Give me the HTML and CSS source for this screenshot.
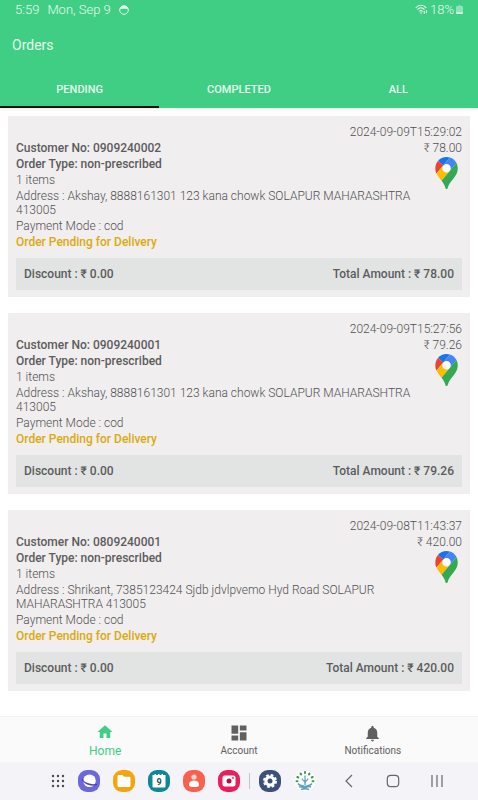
FILE: index.html
```
<!DOCTYPE html>
<html lang="en">
  <head>
    <meta charset="UTF-8" />
    <meta name="viewport" content="width=device-width, initial-scale=1.0" />
    <title>Orders</title>
    <link rel="stylesheet" href="styles.css">
  </head>
  <body>
    <!-- Shared map pin -->
    <svg class="defs" width="0" height="0" aria-hidden="true">
      <symbol id="map-pin" viewBox="0 0 92 132">
        <circle cx="46" cy="46" r="20" fill="#fff" />
        <path fill="#1a73e8" d="M60.2 2.2C55.8.8 51 0 46.1 0 32 0 19.3 6.4 10.8 16.5l21.8 18.3L60.2 2.2z" />
        <path fill="#ea4335" d="M10.8 16.5C4.1 24.5 0 34.9 0 46.1c0 8.7 1.7 15.7 4.6 22l28-33.3-21.8-18.3z" />
        <path fill="#4285f4" d="M46.2 28.5c9.8 0 17.7 7.9 17.7 17.7 0 4.3-1.6 8.3-4.2 11.4 0 0 13.9-16.6 27.5-32.7-5.6-10.8-15.3-19-27-22.7L32.6 34.8c3.3-3.8 8.1-6.3 13.6-6.3" />
        <path fill="#fbbc04" d="M46.2 63.8c-9.8 0-17.7-7.9-17.7-17.7 0-4.3 1.5-8.3 4.1-11.3l-28 33.3c4.8 10.6 12.8 19.2 21 29.9l34.1-40.5c-3.3 3.9-8.1 6.3-13.5 6.3" />
        <path fill="#34a853" d="M59.1 109.2c15.4-24.1 33.3-35 33.3-63 0-7.7-1.9-14.9-5.2-21.3L25.6 98c2.6 3.4 5.3 7.3 7.9 11.3 9.4 14.5 6.8 23.1 12.8 23.1s3.4-8.7 12.8-23.2" />
      </symbol>
    </svg>

    <header class="header">
      <div class="status-bar">
        <span>5:59</span>
        <span>Mon, Sep 9</span>
        <svg width="10" height="10" viewBox="0 0 10 10">
          <circle cx="5" cy="5" r="4.3" fill="none" stroke="#e6faef" stroke-width="1" />
          <path d="M1 4.6C1.2 2 3 .8 5 .8s3.8 1.2 4 3.8C7.5 3.2 6.2 4.4 5 3.6 3.8 4.4 2.5 3.2 1 4.6z" fill="#e6faef" />
        </svg>
        <div class="status-right">
          <svg width="13" height="11" viewBox="0 0 13 11" fill="none" stroke="#e6faef" stroke-width="1.2">
            <path d="M.8 3.8C3.8.4 8.4.4 11.2 3.8M2.5 5.6c2-2.2 5-2.2 7 0M4.3 7.4c1-1 2.5-1 3.4 0" />
            <circle cx="6" cy="9" r=".8" fill="#e6faef" stroke="none" />
            <path d="M9.3 7v2.8M11.5 6.3v3" />
          </svg>
          <span>18%</span>
          <svg width="7" height="10" viewBox="0 0 8 11">
            <path d="M2.5 0h3v1H7a1 1 0 0 1 1 1v6H0V2a1 1 0 0 1 1-1h1.5z" fill="#8fe3b7" />
            <path d="M0 8h8v1a1 1 0 0 1-1 1H1a1 1 0 0 1-1-1z" fill="#e6faef" />
          </svg>
        </div>
      </div>
      <h1>Orders</h1>
      <div class="tabs" role="tablist">
        <button class="tab active" role="tab" aria-selected="true">PENDING</button>
        <button class="tab" role="tab" aria-selected="false">COMPLETED</button>
        <button class="tab" role="tab" aria-selected="false">ALL</button>
      </div>
    </header>

    <main class="orders">
      <article class="order">
        <p class="date">2024-09-09T15:29:02</p>
        <div class="order-head">
          <p class="strong">Customer No: 0909240002</p>
          <p>₹ 78.00</p>
        </div>
        <div class="order-body">
          <div class="details">
            <p class="strong">Order Type: non-prescribed</p>
            <p>1 items</p>
            <p>Address : Akshay, 8888161301 123 kana chowk SOLAPUR MAHARASHTRA 413005</p>
            <p>Payment Mode : cod</p>
            <p class="pending">Order Pending for Delivery</p>
          </div>
          <a class="map-link" href="#" aria-label="Open map"><svg width="23" height="32"><use href="#map-pin" /></svg></a>
        </div>
        <div class="totals">
          <span>Discount : ₹ 0.00</span>
          <span>Total Amount : ₹ 78.00</span>
        </div>
      </article>

      <article class="order">
        <p class="date">2024-09-09T15:27:56</p>
        <div class="order-head">
          <p class="strong">Customer No: 0909240001</p>
          <p>₹ 79.26</p>
        </div>
        <div class="order-body">
          <div class="details">
            <p class="strong">Order Type: non-prescribed</p>
            <p>1 items</p>
            <p>Address : Akshay, 8888161301 123 kana chowk SOLAPUR MAHARASHTRA 413005</p>
            <p>Payment Mode : cod</p>
            <p class="pending">Order Pending for Delivery</p>
          </div>
          <a class="map-link" href="#" aria-label="Open map"><svg width="23" height="32"><use href="#map-pin" /></svg></a>
        </div>
        <div class="totals">
          <span>Discount : ₹ 0.00</span>
          <span>Total Amount : ₹ 79.26</span>
        </div>
      </article>

      <article class="order">
        <p class="date">2024-09-08T11:43:37</p>
        <div class="order-head">
          <p class="strong">Customer No: 0809240001</p>
          <p>₹ 420.00</p>
        </div>
        <div class="order-body">
          <div class="details">
            <p class="strong">Order Type: non-prescribed</p>
            <p>1 items</p>
            <p>Address : Shrikant, 7385123424 Sjdb jdvlpvemo Hyd Road SOLAPUR MAHARASHTRA 413005</p>
            <p>Payment Mode : cod</p>
            <p class="pending">Order Pending for Delivery</p>
          </div>
          <a class="map-link" href="#" aria-label="Open map"><svg width="23" height="32"><use href="#map-pin" /></svg></a>
        </div>
        <div class="totals">
          <span>Discount : ₹ 0.00</span>
          <span>Total Amount : ₹ 420.00</span>
        </div>
      </article>
    </main>

    <nav class="bottom-nav">
      <a class="nav-item active" href="#">
        <svg width="18" height="18" viewBox="0 0 24 24" fill="currentColor"><path d="M10 20v-6h4v6h5v-8h3L12 3 2 12h3v8z" /></svg>
        <span>Home</span>
      </a>
      <a class="nav-item" href="#">
        <svg width="20" height="20" viewBox="0 0 24 24" fill="currentColor"><path d="M3 13h8V3H3v10zm0 8h8v-6H3v6zm10 0h8V11h-8v10zm0-18v6h8V3h-8z" /></svg>
        <span>Account</span>
      </a>
      <a class="nav-item" href="#">
        <svg width="19" height="19" viewBox="0 0 24 24" fill="currentColor"><path d="M12 22c1.1 0 2-.9 2-2h-4c0 1.1.9 2 2 2zm6-6v-5c0-3.07-1.64-5.64-4.5-6.32V4c0-.83-.67-1.5-1.5-1.5s-1.5.67-1.5 1.5v.68C7.63 5.36 6 7.92 6 11v5l-2 2v1h16v-1l-2-2z" /></svg>
        <span>Notifications</span>
      </a>
    </nav>

    <footer class="system-bar">
      <div class="apps">
        <button aria-label="All apps">
          <svg width="14" height="14" viewBox="0 0 14 14" fill="#4a4a4e">
            <circle cx="2" cy="2" r="1.2" /><circle cx="7" cy="2" r="1.2" /><circle cx="12" cy="2" r="1.2" />
            <circle cx="2" cy="7" r="1.2" /><circle cx="7" cy="7" r="1.2" /><circle cx="12" cy="7" r="1.2" />
            <circle cx="2" cy="12" r="1.2" /><circle cx="7" cy="12" r="1.2" /><circle cx="12" cy="12" r="1.2" />
          </svg>
        </button>
        <button aria-label="Internet">
          <svg width="22" height="22" viewBox="0 0 22 22">
            <rect width="22" height="22" rx="9" fill="#6b68dc" />
            <circle cx="11.5" cy="10.8" r="6.3" fill="#fff" />
            <path d="M4.5 9.5C5 12.500 12.500 16 18.500 14.500" fill="none" stroke="#4a46b8" stroke-width="1.5" stroke-linecap="round" />
          </svg>
        </button>
        <button aria-label="My Files">
          <svg width="22" height="22" viewBox="0 0 22 22">
            <rect width="22" height="22" rx="9" fill="#f2a50f" />
            <path d="M5.5 5h4L11 6.700h5.500a1 1 0 0 1 1 1v7.800a1.500 1.500 0 0 1-1.500 1.500H6a1.500 1.500 0 0 1-1.500-1.500V6a1 1 0 0 1 1-1z" fill="#fff" />
          </svg>
        </button>
        <button aria-label="Calendar">
          <svg width="22" height="22" viewBox="0 0 22 22">
            <rect width="22" height="22" rx="9" fill="#0f8798" />
            <path d="M4.5 5h2V4H8v1h2V4h1.500v1h2V4H15v1h2.500v11.500a1 1 0 0 1-1 1h-11a1 1 0 0 1-1-1z" fill="#fff" />
            <text x="11" y="15" text-anchor="middle" class="calendar-day">9</text>
          </svg>
        </button>
        <button aria-label="Contacts">
          <svg width="22" height="22" viewBox="0 0 22 22">
            <rect width="22" height="22" rx="9" fill="#f9614f" />
            <circle cx="11" cy="7" r="2.6" fill="#fbd6d0" />
            <path d="M6 14.500c0-2.500 2.200-4 5-4s5 1.500 5 4-2 2.500-5 2.500-5 0-5-2.500z" fill="#fff" />
          </svg>
        </button>
        <button aria-label="Camera">
          <svg width="22" height="22" viewBox="0 0 22 22">
            <rect width="22" height="22" rx="9" fill="#e91e5b" />
            <rect x="4.5" y="5.5" width="13" height="11" rx="2" fill="#fff" />
            <circle cx="11" cy="11" r="2.5" fill="#b80f3e" />
            <circle cx="15" cy="8" r=".9" fill="#e91e5b" />
          </svg>
        </button>
        <span class="divider"></span>
        <button aria-label="Settings">
          <svg width="22" height="22" viewBox="0 0 22 22">
            <rect width="22" height="22" rx="9" fill="#3c5079" />
            <circle cx="11" cy="11" r="5.6" fill="#fff" />
            <circle cx="11" cy="11" r="6" fill="none" stroke="#fff" stroke-width="2" stroke-dasharray="2.7 2.01" />
            <circle cx="11" cy="11" r="2.5" fill="#3c5079" />
          </svg>
        </button>
        <button aria-label="Pharmacy">
          <svg width="22" height="22" viewBox="0 0 22 22">
            <circle cx="11" cy="11" r="10.5" fill="#fff" />
            <g fill="none" stroke="#3b9b4c" stroke-width="2" stroke-linecap="round">
              <path d="M11 2v1M6.5 3.5l.6.9M15.5 3.5l-.6.9M3.3 7l1 .5M18.7 7l-1 .5M2.5 11.3h1M19.5 11.3h-1" />
            </g>
            <path d="M11 5.500V15M8.500 8.500c-1.500 1.500 4.500 3 2.500 5M13.500 8.500c1.500 1.500-4.500 3-2.500 5" fill="none" stroke="#69a7bd" stroke-width="1.3" />
            <path d="M4 13.500c2 3 5 1.500 7 3 2-1.500 5 0 7-3M5 17c3-1.500 4.500 1.500 6 1s3-2.500 6-1M7 19.500c3-1 5-1 8 0" fill="none" stroke="#5c9fc5" stroke-width="1.5" />
          </svg>
        </button>
      </div>
      <div class="keys">
        <button aria-label="Back">
          <svg width="14" height="14" viewBox="0 0 14 14" fill="none" stroke="#68686b" stroke-width="1.2"><path d="M10 1L4 7l6 6" /></svg>
        </button>
        <button aria-label="Home">
          <svg width="14" height="14" viewBox="0 0 14 14" fill="none" stroke="#68686b" stroke-width="1.2"><rect x="1.3" y="1.3" width="11.4" height="11.4" rx="3.5" /></svg>
        </button>
        <button aria-label="Recents">
          <svg width="14" height="14" viewBox="0 0 14 14" fill="none" stroke="#68686b" stroke-width="1.2"><path d="M2 1v12M7 1v12M12 1v12" /></svg>
        </button>
      </div>
    </footer>
  </body>
</html>
```
FILE: styles.css
```
* {
  margin: 0;
  padding: 0;
  box-sizing: border-box;
}

body {
  font-family: Roboto, sans-serif;
  font-size: 12px;
  font-weight: 300;
  line-height: 14px;
  color: #505050;
  background: #fff;
  min-height: 100vh;
  display: flex;
  flex-direction: column;
}

button {
  font: inherit;
  color: inherit;
  background: none;
  border: none;
  cursor: pointer;
}

a {
  color: inherit;
  text-decoration: none;
}

svg {
  display: block;
}

.defs {
  position: absolute;
}

/* Header */
.header {
  background: #40ce84;
  color: #e6faef;
  box-shadow: 0 1px 3px rgba(0, 0, 0, 0.1);
}

.status-bar {
  display: flex;
  align-items: center;
  gap: 8px;
  height: 19px;
  padding: 0 15px;
  font-size: 13px;
  font-weight: 300;
}

.status-right {
  display: flex;
  align-items: center;
  gap: 2px;
  margin-left: auto;
}

.header h1 {
  padding: 16px 12px;
  font-size: 14px;
  font-weight: 400;
  line-height: 20px;
}

.tabs {
  display: flex;
}

.tab {
  flex: 1;
  height: 37px;
  padding-top: 2px;
  font-size: 11px;
  font-weight: 500;
  border-bottom: 2px solid transparent;
}

.tab.active {
  border-bottom-color: #111;
}

/* Orders */
.orders {
  flex: 1;
  display: flex;
  flex-direction: column;
  gap: 16px;
  padding: 8px 8px 24px;
}

.order {
  display: flex;
  flex-direction: column;
  gap: 2px;
  padding: 9px 8px 7px;
  background: #f0eeef;
}

.date {
  text-align: right;
}

.order-head,
.order-body,
.totals {
  display: flex;
  justify-content: space-between;
}

.details {
  flex: 1;
  display: flex;
  flex-direction: column;
  gap: 2px;
}

.strong {
  font-weight: 500;
  color: #5c5c5c;
}

.pending {
  font-weight: 500;
  color: #dcaa0c;
}

.map-link {
  display: flex;
  justify-content: center;
  width: 32px;
}

.totals {
  margin-top: 7px;
  padding: 9px 8px;
  font-weight: 500;
  color: #5c5c5c;
  background: #e1e4e3;
}

/* Bottom navigation */
.bottom-nav {
  display: flex;
  padding: 0 8%;
  background: #fafafa;
  border-top: 1px solid #f3f3f3;
}

.nav-item {
  flex: 1;
  display: flex;
  flex-direction: column;
  align-items: center;
  justify-content: flex-end;
  height: 45px;
  padding-bottom: 4px;
  font-size: 10px;
  font-weight: 400;
  color: #606060;
}

.nav-item.active {
  font-size: 12px;
  color: #40ce84;
}

.nav-item span {
  margin-top: 1px;
}

.nav-item.active span {
  margin-top: 3px;
}

/* System bar */
.system-bar {
  display: flex;
  align-items: center;
  justify-content: space-between;
  height: 38px;
  padding: 0 19px 0 51px;
  background: #f4f4f8;
}

.apps {
  display: flex;
  align-items: center;
  gap: 13px;
}

.divider {
  width: 1px;
  height: 16px;
  margin: 0 -4px;
  background: #c4c4c8;
}

.calendar-day {
  font-size: 9px;
  font-weight: 700;
  fill: #1c4f63;
}

.keys {
  display: flex;
}

.keys button {
  display: flex;
  justify-content: center;
  width: 44px;
}
```
